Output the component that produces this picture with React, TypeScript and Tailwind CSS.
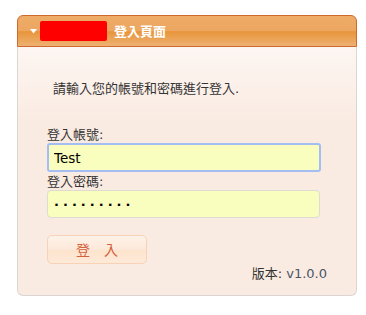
export default function App() {
  return (
    <div
      className="w-[366px] h-[315px] bg-white pt-[15px] pl-[17px]"
      style={{ fontFamily: '"DejaVu Sans", "Noto Sans CJK TC", sans-serif' }}
    >
      <div className="w-[340px] flex flex-col">
        <div className="h-[32px] flex items-center rounded-t-[6px] border border-[#cf6a2e] bg-[linear-gradient(to_bottom,#eeac68,#eca660_50%,#e8953b_52%,#eeb172)] pl-[12px]">
          <svg width="8" height="5" viewBox="0 0 8 5" className="mr-[2px]">
            <path d="M0 0H7L3.5 4.5Z" fill="#ffffff" />
          </svg>
          <div className="w-[67px] h-[20px] bg-[#ff0000] rounded-[2px]" />
          <span className="ml-[7px] text-[13px] font-bold text-white leading-none">登入頁面</span>
        </div>
        <div className="h-[249px] flex flex-col border-x border-b border-[#dcd6d2] rounded-b-[6px] bg-[linear-gradient(to_bottom,#fdf6f2,#faebe2_75px,#faebe2)] pt-[34px] pl-[29px] pr-[29px] text-[#333333]">
          <p className="ml-[6px] text-[13px] leading-[16px]">請輸入您的帳號和密碼進行登入.</p>
          <label className="mt-[30px] text-[13px] leading-[16px]">登入帳號:</label>
          <input
            defaultValue="Test"
            className="w-[274px] h-[29px] rounded-[3px] border-2 border-[#a4bdf2] bg-[#f9fdbd] px-[5px] text-[13.5px] text-black outline-none"
          />
          <label className="mt-[2px] text-[13px] leading-[16px]">登入密碼:</label>
          <input
            defaultValue="·········"
            className="w-[273px] h-[28px] rounded-[4px] border border-[#dcdcd0] bg-[#f9fdbd] px-[6px] text-[13px] font-bold text-black tracking-[4px] outline-none"
          />
          <button className="mt-[17px] w-[100px] h-[29px] rounded-[5px] border border-[#f8d2b6] bg-[linear-gradient(to_bottom,#fef2e8,#fde9da_50%,#fde3cc_52%,#feead9)] text-[14px] text-[#d2603a] leading-none">
            登&emsp;入
          </button>
          <p className="mt-[2px] self-end text-[13px] leading-[16px]">
            版本: <span className="text-[#4a5466]">v1.0.0</span>
          </p>
        </div>
      </div>
    </div>
  );
}
